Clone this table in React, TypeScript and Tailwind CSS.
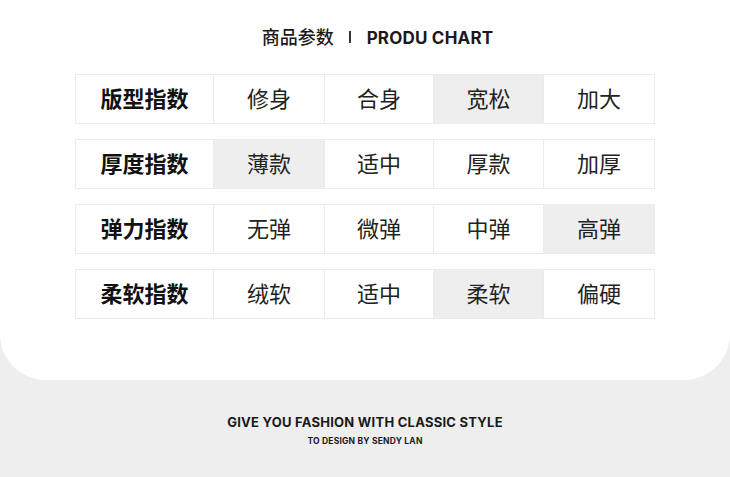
const rows: { label: string; items: string[]; active: number }[] = [
  { label: "版型指数", items: ["修身", "合身", "宽松", "加大"], active: 2 },
  { label: "厚度指数", items: ["薄款", "适中", "厚款", "加厚"], active: 0 },
  { label: "弹力指数", items: ["无弹", "微弹", "中弹", "高弹"], active: 3 },
  { label: "柔软指数", items: ["绒软", "适中", "柔软", "偏硬"], active: 2 },
];

const cjk = "font-['Noto_Sans_CJK_SC','Noto_Sans',sans-serif]";

export default function App() {
  return (
    <div className="h-[477px] w-[730px] overflow-hidden bg-[#eeeeee]">
      <div className="flex h-[380px] flex-col items-center rounded-b-[46px] bg-white pt-[25px]">
        <h1 className="ml-[25px] flex h-[24px] items-center text-[#1a1a1a]">
          <span className={`${cjk} pb-[3px] text-[18px] font-medium leading-none`}>商品参数</span>
          <span className="ml-[15px] mr-[16px] h-[12px] w-[2px] bg-[#333]" />
          <span className="pt-[2px] font-['Inter',sans-serif] text-[17px] font-bold leading-none tracking-[0.2px]">
            PRODU CHART
          </span>
        </h1>
        <div className="mt-[25px] flex flex-col gap-[15px]">
          {rows.map((row) => (
            <div
              key={row.label}
              className={`${cjk} grid h-[50px] grid-cols-[137px_111px_109px_110px_111px] border border-[#ebebeb] text-[22px] leading-none text-[#222]`}
            >
              <div className="flex items-center justify-center pb-[4px] font-bold text-[#111]">{row.label}</div>
              {row.items.map((item, idx) => (
                <div
                  key={item}
                  className={`flex items-center justify-center border-l border-[#ebebeb] pb-[4px] ${
                    idx === row.active ? "bg-[#eeeeee]" : "bg-white"
                  }`}
                >
                  {item}
                </div>
              ))}
            </div>
          ))}
        </div>
      </div>
      <div className="flex flex-col items-center pt-[34px] font-['Inter',sans-serif] font-bold text-[#1a1a1a]">
        <p className="text-[13px] leading-[17px] tracking-[0.25px]">GIVE YOU FASHION WITH CLASSIC STYLE</p>
        <p className="mt-[5px] text-[8.5px] leading-[11px] tracking-[0.2px]">TO DESIGN BY SENDY LAN</p>
      </div>
    </div>
  );
}
